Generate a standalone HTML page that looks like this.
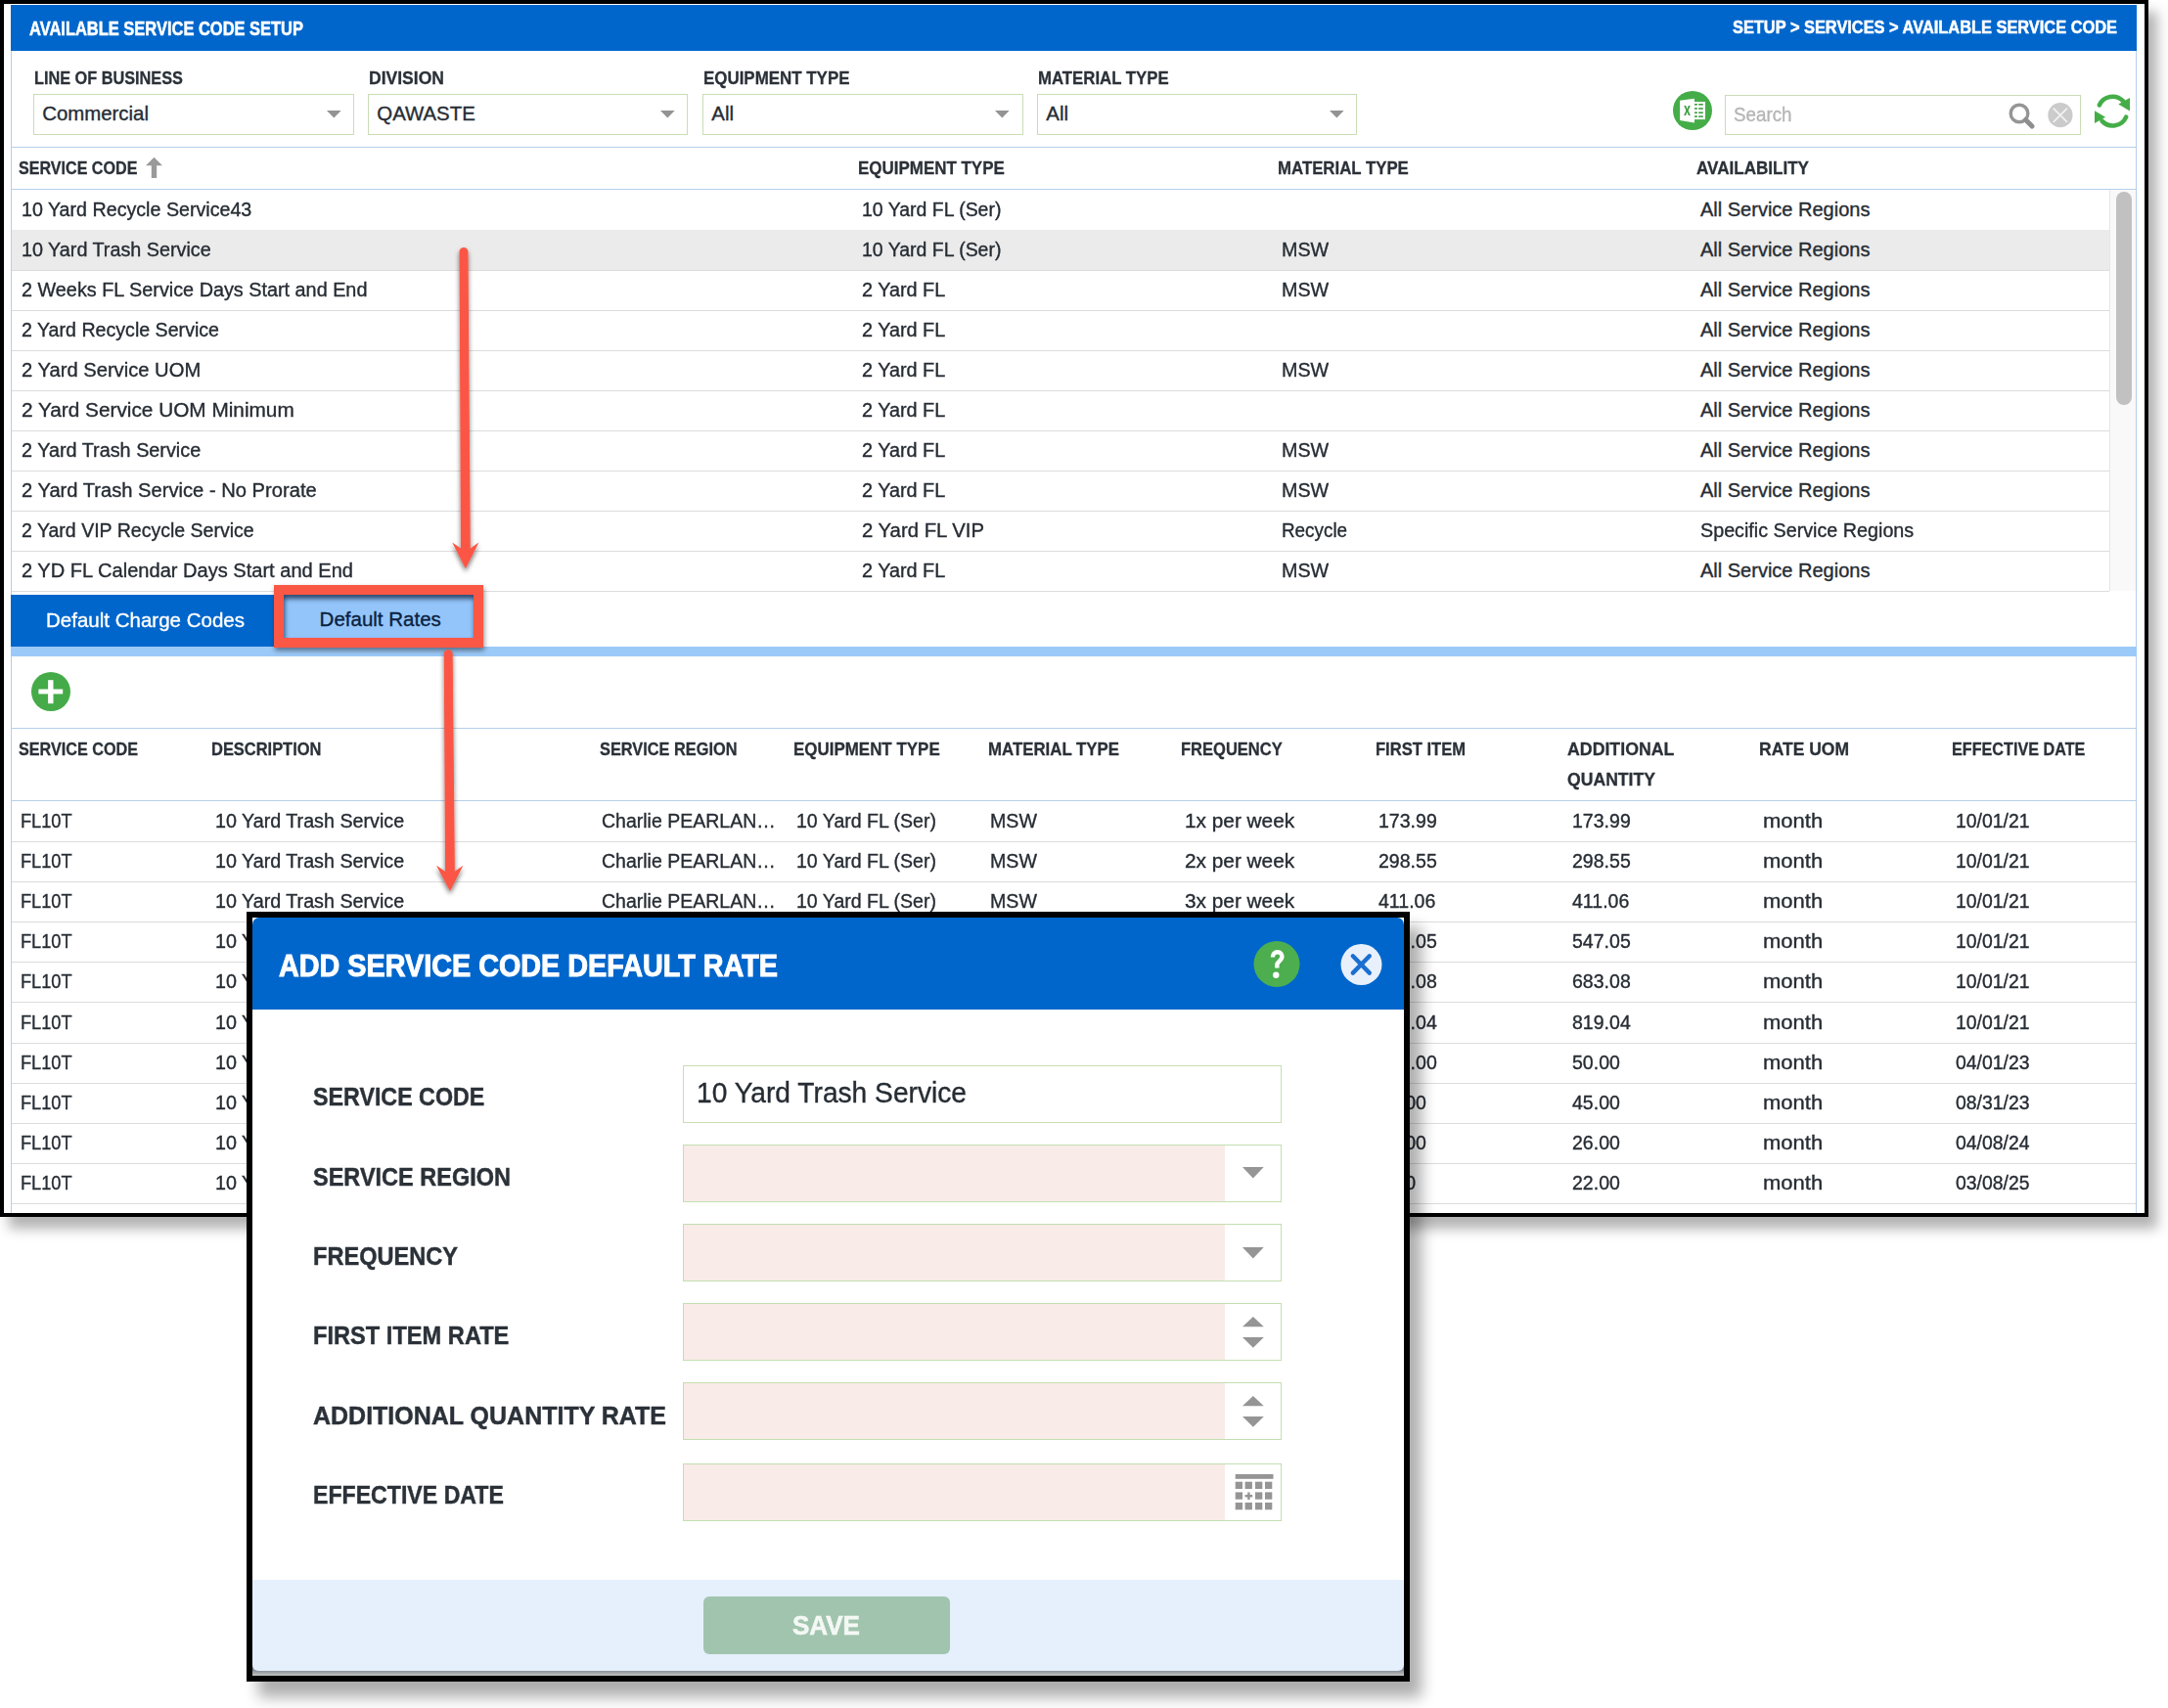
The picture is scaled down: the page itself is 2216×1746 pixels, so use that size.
<!DOCTYPE html>
<html><head><meta charset="utf-8">
<style>
html,body{margin:0;padding:0;}
body{width:2216px;height:1746px;position:relative;overflow:hidden;background:#fff;font-family:"Liberation Sans",sans-serif;}
.a{position:absolute;}
.t{position:absolute;white-space:nowrap;line-height:1;}
</style></head><body>
<div class="a" style="left:0;top:0;width:2196px;height:1244px;box-sizing:border-box;border:4px solid #000;background:#fff;box-shadow:9px 12px 12px rgba(0,0,0,.30);"></div>
<div class="a" style="left:11.0px;top:5.0px;width:2173.0px;height:47.0px;background:#0066cc;"></div>
<div class="t" style="left:30.0px;top:19.8px;font-size:19.3px;font-weight:bold;color:#ffffff;-webkit-text-stroke:0.3px #ffffff;transform:scaleX(0.8541);transform-origin:0 0;-webkit-text-stroke:0.5px #fff;">AVAILABLE SERVICE CODE SETUP</div>
<div class="t" style="left:1771.3px;top:18.7px;font-size:18.6px;font-weight:bold;color:#ffffff;-webkit-text-stroke:0.3px #ffffff;transform:scaleX(0.8811);transform-origin:0 0;-webkit-text-stroke:0.5px #fff;">SETUP &gt; SERVICES &gt; AVAILABLE SERVICE CODE</div>
<div class="a" style="left:11.0px;top:52.0px;width:1.0px;height:1188.0px;background:#b5cfec;"></div>
<div class="a" style="left:2183.0px;top:52.0px;width:1.0px;height:1188.0px;background:#b5cfec;"></div>
<div class="t" style="left:35.0px;top:70.7px;font-size:18.6px;font-weight:bold;color:#2b3138;-webkit-text-stroke:0.3px #2b3138;transform:scaleX(0.8751);transform-origin:0 0;">LINE OF BUSINESS</div>
<div class="a" style="left:34.2px;top:96.3px;width:328.1px;height:41.9px;box-sizing:border-box;border:1px solid #c9ddb6;background:#fff;"></div>
<div class="t" style="left:43.2px;top:105.6px;font-size:20.4px;color:#262c33;-webkit-text-stroke:0.35px #262c33;">Commercial</div>
<svg class="a" style="left:333.6px;top:113px" width="15" height="8" viewBox="0 0 15 8"><path d="M0 0H14.7L7.35 7.5Z" fill="#939393"/></svg>
<div class="t" style="left:377.1px;top:70.7px;font-size:18.6px;font-weight:bold;color:#2b3138;-webkit-text-stroke:0.3px #2b3138;transform:scaleX(0.9433);transform-origin:0 0;">DIVISION</div>
<div class="a" style="left:376.3px;top:96.3px;width:327.1px;height:41.9px;box-sizing:border-box;border:1px solid #c9ddb6;background:#fff;"></div>
<div class="t" style="left:385.3px;top:105.6px;font-size:20.4px;color:#262c33;-webkit-text-stroke:0.35px #262c33;">QAWASTE</div>
<svg class="a" style="left:674.7px;top:113px" width="15" height="8" viewBox="0 0 15 8"><path d="M0 0H14.7L7.35 7.5Z" fill="#939393"/></svg>
<div class="t" style="left:719.1px;top:70.7px;font-size:18.6px;font-weight:bold;color:#2b3138;-webkit-text-stroke:0.3px #2b3138;transform:scaleX(0.9100);transform-origin:0 0;">EQUIPMENT TYPE</div>
<div class="a" style="left:718.3px;top:96.3px;width:327.4px;height:41.9px;box-sizing:border-box;border:1px solid #c9ddb6;background:#fff;"></div>
<div class="t" style="left:727.3px;top:105.6px;font-size:20.4px;color:#262c33;-webkit-text-stroke:0.35px #262c33;">All</div>
<svg class="a" style="left:1017.0px;top:113px" width="15" height="8" viewBox="0 0 15 8"><path d="M0 0H14.7L7.35 7.5Z" fill="#939393"/></svg>
<div class="t" style="left:1061.1px;top:70.7px;font-size:18.6px;font-weight:bold;color:#2b3138;-webkit-text-stroke:0.3px #2b3138;transform:scaleX(0.9022);transform-origin:0 0;">MATERIAL TYPE</div>
<div class="a" style="left:1060.3px;top:96.3px;width:327.2px;height:41.9px;box-sizing:border-box;border:1px solid #c9ddb6;background:#fff;"></div>
<div class="t" style="left:1069.3px;top:105.6px;font-size:20.4px;color:#262c33;-webkit-text-stroke:0.35px #262c33;">All</div>
<svg class="a" style="left:1358.8px;top:113px" width="15" height="8" viewBox="0 0 15 8"><path d="M0 0H14.7L7.35 7.5Z" fill="#939393"/></svg>
<div class="a" style="left:11.0px;top:150.0px;width:2173.0px;height:1.0px;background:#b5cfec;"></div>
<div class="t" style="left:18.7px;top:162.6px;font-size:18.6px;font-weight:bold;color:#2b3138;-webkit-text-stroke:0.3px #2b3138;transform:scaleX(0.8660);transform-origin:0 0;">SERVICE CODE</div>
<div class="t" style="left:876.5px;top:162.6px;font-size:18.6px;font-weight:bold;color:#2b3138;-webkit-text-stroke:0.3px #2b3138;transform:scaleX(0.9119);transform-origin:0 0;">EQUIPMENT TYPE</div>
<div class="t" style="left:1306.0px;top:162.6px;font-size:18.6px;font-weight:bold;color:#2b3138;-webkit-text-stroke:0.3px #2b3138;transform:scaleX(0.9036);transform-origin:0 0;">MATERIAL TYPE</div>
<div class="t" style="left:1734.4px;top:162.6px;font-size:18.6px;font-weight:bold;color:#2b3138;-webkit-text-stroke:0.3px #2b3138;transform:scaleX(0.9176);transform-origin:0 0;">AVAILABILITY</div>
<svg class="a" style="left:149px;top:160px" width="18" height="23" viewBox="0 0 18 23"><path d="M8.5 0.7L17 9.2H11.2V22H5.8V9.2H0Z" fill="#9a9a9a"/></svg>
<div class="a" style="left:11.0px;top:193.0px;width:2173.0px;height:1.0px;background:#b5cfec;"></div>
<div class="a" style="left:12.0px;top:235.0px;width:2144.0px;height:1.0px;background:#dcdcdc;"></div>
<div class="t" style="left:21.5px;top:203.7px;font-size:20px;color:#262c33;-webkit-text-stroke:0.35px #262c33;transform:scaleX(0.9829);transform-origin:0 0;">10 Yard Recycle Service43</div>
<div class="t" style="left:880.5px;top:203.7px;font-size:20px;color:#262c33;-webkit-text-stroke:0.35px #262c33;transform:scaleX(0.9729);transform-origin:0 0;">10 Yard FL (Ser)</div>
<div class="t" style="left:1738.0px;top:203.7px;font-size:20px;color:#262c33;-webkit-text-stroke:0.35px #262c33;">All Service Regions</div>
<div class="a" style="left:12.0px;top:276.0px;width:2144.0px;height:1.0px;background:#dcdcdc;"></div>
<div class="a" style="left:12.0px;top:235.0px;width:2144.0px;height:41.0px;background:#ebebeb;"></div>
<div class="t" style="left:21.5px;top:244.7px;font-size:20px;color:#262c33;-webkit-text-stroke:0.35px #262c33;transform:scaleX(0.9881);transform-origin:0 0;">10 Yard Trash Service</div>
<div class="t" style="left:880.5px;top:244.7px;font-size:20px;color:#262c33;-webkit-text-stroke:0.35px #262c33;transform:scaleX(0.9729);transform-origin:0 0;">10 Yard FL (Ser)</div>
<div class="t" style="left:1309.5px;top:244.7px;font-size:20px;color:#262c33;-webkit-text-stroke:0.35px #262c33;transform:scaleX(0.9859);transform-origin:0 0;">MSW</div>
<div class="t" style="left:1738.0px;top:244.7px;font-size:20px;color:#262c33;-webkit-text-stroke:0.35px #262c33;">All Service Regions</div>
<div class="a" style="left:12.0px;top:317.0px;width:2144.0px;height:1.0px;background:#dcdcdc;"></div>
<div class="t" style="left:21.5px;top:285.7px;font-size:20px;color:#262c33;-webkit-text-stroke:0.35px #262c33;transform:scaleX(0.9904);transform-origin:0 0;">2 Weeks FL Service Days Start and End</div>
<div class="t" style="left:880.5px;top:285.7px;font-size:20px;color:#262c33;-webkit-text-stroke:0.35px #262c33;transform:scaleX(0.9909);transform-origin:0 0;">2 Yard FL</div>
<div class="t" style="left:1309.5px;top:285.7px;font-size:20px;color:#262c33;-webkit-text-stroke:0.35px #262c33;transform:scaleX(0.9859);transform-origin:0 0;">MSW</div>
<div class="t" style="left:1738.0px;top:285.7px;font-size:20px;color:#262c33;-webkit-text-stroke:0.35px #262c33;">All Service Regions</div>
<div class="a" style="left:12.0px;top:358.0px;width:2144.0px;height:1.0px;background:#dcdcdc;"></div>
<div class="t" style="left:21.5px;top:326.7px;font-size:20px;color:#262c33;-webkit-text-stroke:0.35px #262c33;transform:scaleX(0.9805);transform-origin:0 0;">2 Yard Recycle Service</div>
<div class="t" style="left:880.5px;top:326.7px;font-size:20px;color:#262c33;-webkit-text-stroke:0.35px #262c33;transform:scaleX(0.9909);transform-origin:0 0;">2 Yard FL</div>
<div class="t" style="left:1738.0px;top:326.7px;font-size:20px;color:#262c33;-webkit-text-stroke:0.35px #262c33;">All Service Regions</div>
<div class="a" style="left:12.0px;top:399.0px;width:2144.0px;height:1.0px;background:#dcdcdc;"></div>
<div class="t" style="left:21.5px;top:367.7px;font-size:20px;color:#262c33;-webkit-text-stroke:0.35px #262c33;transform:scaleX(1.0091);transform-origin:0 0;">2 Yard Service UOM</div>
<div class="t" style="left:880.5px;top:367.7px;font-size:20px;color:#262c33;-webkit-text-stroke:0.35px #262c33;transform:scaleX(0.9909);transform-origin:0 0;">2 Yard FL</div>
<div class="t" style="left:1309.5px;top:367.7px;font-size:20px;color:#262c33;-webkit-text-stroke:0.35px #262c33;transform:scaleX(0.9859);transform-origin:0 0;">MSW</div>
<div class="t" style="left:1738.0px;top:367.7px;font-size:20px;color:#262c33;-webkit-text-stroke:0.35px #262c33;">All Service Regions</div>
<div class="a" style="left:12.0px;top:440.0px;width:2144.0px;height:1.0px;background:#dcdcdc;"></div>
<div class="t" style="left:21.5px;top:408.7px;font-size:20px;color:#262c33;-webkit-text-stroke:0.35px #262c33;transform:scaleX(1.0391);transform-origin:0 0;">2 Yard Service UOM Minimum</div>
<div class="t" style="left:880.5px;top:408.7px;font-size:20px;color:#262c33;-webkit-text-stroke:0.35px #262c33;transform:scaleX(0.9909);transform-origin:0 0;">2 Yard FL</div>
<div class="t" style="left:1738.0px;top:408.7px;font-size:20px;color:#262c33;-webkit-text-stroke:0.35px #262c33;">All Service Regions</div>
<div class="a" style="left:12.0px;top:481.0px;width:2144.0px;height:1.0px;background:#dcdcdc;"></div>
<div class="t" style="left:21.5px;top:449.7px;font-size:20px;color:#262c33;-webkit-text-stroke:0.35px #262c33;transform:scaleX(0.9908);transform-origin:0 0;">2 Yard Trash Service</div>
<div class="t" style="left:880.5px;top:449.7px;font-size:20px;color:#262c33;-webkit-text-stroke:0.35px #262c33;transform:scaleX(0.9909);transform-origin:0 0;">2 Yard FL</div>
<div class="t" style="left:1309.5px;top:449.7px;font-size:20px;color:#262c33;-webkit-text-stroke:0.35px #262c33;transform:scaleX(0.9859);transform-origin:0 0;">MSW</div>
<div class="t" style="left:1738.0px;top:449.7px;font-size:20px;color:#262c33;-webkit-text-stroke:0.35px #262c33;">All Service Regions</div>
<div class="a" style="left:12.0px;top:522.0px;width:2144.0px;height:1.0px;background:#dcdcdc;"></div>
<div class="t" style="left:21.5px;top:490.7px;font-size:20px;color:#262c33;-webkit-text-stroke:0.35px #262c33;transform:scaleX(1.0077);transform-origin:0 0;">2 Yard Trash Service - No Prorate</div>
<div class="t" style="left:880.5px;top:490.7px;font-size:20px;color:#262c33;-webkit-text-stroke:0.35px #262c33;transform:scaleX(0.9909);transform-origin:0 0;">2 Yard FL</div>
<div class="t" style="left:1309.5px;top:490.7px;font-size:20px;color:#262c33;-webkit-text-stroke:0.35px #262c33;transform:scaleX(0.9859);transform-origin:0 0;">MSW</div>
<div class="t" style="left:1738.0px;top:490.7px;font-size:20px;color:#262c33;-webkit-text-stroke:0.35px #262c33;">All Service Regions</div>
<div class="a" style="left:12.0px;top:563.0px;width:2144.0px;height:1.0px;background:#dcdcdc;"></div>
<div class="t" style="left:21.5px;top:531.7px;font-size:20px;color:#262c33;-webkit-text-stroke:0.35px #262c33;transform:scaleX(0.9764);transform-origin:0 0;">2 Yard VIP Recycle Service</div>
<div class="t" style="left:880.5px;top:531.7px;font-size:20px;color:#262c33;-webkit-text-stroke:0.35px #262c33;transform:scaleX(1.0160);transform-origin:0 0;">2 Yard FL VIP</div>
<div class="t" style="left:1309.5px;top:531.7px;font-size:20px;color:#262c33;-webkit-text-stroke:0.35px #262c33;transform:scaleX(0.9432);transform-origin:0 0;">Recycle</div>
<div class="t" style="left:1738.0px;top:531.7px;font-size:20px;color:#262c33;-webkit-text-stroke:0.35px #262c33;transform:scaleX(0.9864);transform-origin:0 0;">Specific Service Regions</div>
<div class="a" style="left:12.0px;top:604.0px;width:2144.0px;height:1.0px;background:#dcdcdc;"></div>
<div class="t" style="left:21.5px;top:572.7px;font-size:20px;color:#262c33;-webkit-text-stroke:0.35px #262c33;transform:scaleX(1.0031);transform-origin:0 0;">2 YD FL Calendar Days Start and End</div>
<div class="t" style="left:880.5px;top:572.7px;font-size:20px;color:#262c33;-webkit-text-stroke:0.35px #262c33;transform:scaleX(0.9909);transform-origin:0 0;">2 Yard FL</div>
<div class="t" style="left:1309.5px;top:572.7px;font-size:20px;color:#262c33;-webkit-text-stroke:0.35px #262c33;transform:scaleX(0.9859);transform-origin:0 0;">MSW</div>
<div class="t" style="left:1738.0px;top:572.7px;font-size:20px;color:#262c33;-webkit-text-stroke:0.35px #262c33;">All Service Regions</div>
<div class="a" style="left:2156.0px;top:194.0px;width:27.0px;height:410.0px;background:#f9f9f9;border-left:1px solid #e6e6e6;box-sizing:border-box;"></div>
<div class="a" style="left:2163.0px;top:196.0px;width:16.0px;height:218.0px;background:#c1c1c1;border-radius:8px;"></div>
<div class="a" style="left:11.0px;top:608.0px;width:279.0px;height:53.0px;background:#0066cc;"></div>
<div class="t" style="left:47.0px;top:623.6px;font-size:20.8px;color:#ffffff;-webkit-text-stroke:0.35px #ffffff;transform:scaleX(0.9865);transform-origin:0 0;">Default Charge Codes</div>
<div class="a" style="left:290.0px;top:608.0px;width:194.0px;height:53.0px;background:#94c5fa;"></div>
<div class="a" style="left:11.0px;top:661.0px;width:2173.0px;height:10.0px;background:#9ccaf8;"></div>
<div class="t" style="left:326.6px;top:623.2px;font-size:20.5px;color:#0b1f3f;-webkit-text-stroke:0.35px #0b1f3f;">Default Rates</div>
<div class="a" style="left:280px;top:598px;width:214px;height:64px;box-sizing:border-box;border:10px solid #fb5745;box-shadow:1px 3px 5px rgba(0,0,0,.45), inset 1px 4px 5px rgba(10,30,60,.75);"></div>
<svg class="a" style="left:32px;top:687px" width="40" height="40" viewBox="0 0 40 40"><circle cx="20" cy="20" r="20" fill="#45ab48"/><rect x="7.4" y="17.5" width="24.8" height="4.9" fill="#fff"/><rect x="17.1" y="8.2" width="5.4" height="24" fill="#fff"/></svg>
<div class="a" style="left:11.0px;top:744.0px;width:2173.0px;height:1.0px;background:#b5cfec;"></div>
<div class="t" style="left:19.0px;top:757.2px;font-size:18.6px;font-weight:bold;color:#2b3138;-webkit-text-stroke:0.3px #2b3138;transform:scaleX(0.8703);transform-origin:0 0;">SERVICE CODE</div>
<div class="t" style="left:216.4px;top:757.2px;font-size:18.6px;font-weight:bold;color:#2b3138;-webkit-text-stroke:0.3px #2b3138;transform:scaleX(0.8845);transform-origin:0 0;">DESCRIPTION</div>
<div class="t" style="left:613.3px;top:757.2px;font-size:18.6px;font-weight:bold;color:#2b3138;-webkit-text-stroke:0.3px #2b3138;transform:scaleX(0.8792);transform-origin:0 0;">SERVICE REGION</div>
<div class="t" style="left:811.2px;top:757.2px;font-size:18.6px;font-weight:bold;color:#2b3138;-webkit-text-stroke:0.3px #2b3138;transform:scaleX(0.9112);transform-origin:0 0;">EQUIPMENT TYPE</div>
<div class="t" style="left:1009.5px;top:757.2px;font-size:18.6px;font-weight:bold;color:#2b3138;-webkit-text-stroke:0.3px #2b3138;transform:scaleX(0.9049);transform-origin:0 0;">MATERIAL TYPE</div>
<div class="t" style="left:1207.4px;top:757.2px;font-size:18.6px;font-weight:bold;color:#2b3138;-webkit-text-stroke:0.3px #2b3138;transform:scaleX(0.8882);transform-origin:0 0;">FREQUENCY</div>
<div class="t" style="left:1405.6px;top:757.2px;font-size:18.6px;font-weight:bold;color:#2b3138;-webkit-text-stroke:0.3px #2b3138;transform:scaleX(0.8906);transform-origin:0 0;">FIRST ITEM</div>
<div class="t" style="left:1602.0px;top:757.2px;font-size:18.6px;font-weight:bold;color:#2b3138;-webkit-text-stroke:0.3px #2b3138;transform:scaleX(0.9542);transform-origin:0 0;">ADDITIONAL</div>
<div class="t" style="left:1798.2px;top:757.2px;font-size:18.6px;font-weight:bold;color:#2b3138;-webkit-text-stroke:0.3px #2b3138;transform:scaleX(0.9409);transform-origin:0 0;">RATE UOM</div>
<div class="t" style="left:1994.7px;top:757.2px;font-size:18.6px;font-weight:bold;color:#2b3138;-webkit-text-stroke:0.3px #2b3138;transform:scaleX(0.8705);transform-origin:0 0;">EFFECTIVE DATE</div>
<div class="t" style="left:1602.0px;top:787.6px;font-size:18.6px;font-weight:bold;color:#2b3138;-webkit-text-stroke:0.3px #2b3138;transform:scaleX(0.9471);transform-origin:0 0;">QUANTITY</div>
<div class="a" style="left:11.0px;top:818.0px;width:2173.0px;height:1.0px;background:#b5cfec;"></div>
<div class="a" style="left:12.0px;top:860.0px;width:2171.0px;height:1.0px;background:#dcdcdc;"></div>
<div class="t" style="left:20.5px;top:828.6px;font-size:20px;color:#262c33;-webkit-text-stroke:0.35px #262c33;transform:scaleX(0.9100);transform-origin:0 0;">FL10T</div>
<div class="t" style="left:219.7px;top:828.6px;font-size:20px;color:#262c33;-webkit-text-stroke:0.35px #262c33;transform:scaleX(0.9850);transform-origin:0 0;">10 Yard Trash Service</div>
<div class="t" style="left:615.3px;top:828.6px;font-size:20px;color:#262c33;-webkit-text-stroke:0.35px #262c33;transform:scaleX(0.9750);transform-origin:0 0;">Charlie PEARLAN…</div>
<div class="t" style="left:814.0px;top:828.6px;font-size:20px;color:#262c33;-webkit-text-stroke:0.35px #262c33;transform:scaleX(0.9770);transform-origin:0 0;">10 Yard FL (Ser)</div>
<div class="t" style="left:1012.0px;top:828.6px;font-size:20px;color:#262c33;-webkit-text-stroke:0.35px #262c33;transform:scaleX(0.9800);transform-origin:0 0;">MSW</div>
<div class="t" style="left:1211.2px;top:828.6px;font-size:20px;color:#262c33;-webkit-text-stroke:0.35px #262c33;transform:scaleX(1.0400);transform-origin:0 0;">1x per week</div>
<div class="t" style="left:1409.4px;top:828.6px;font-size:20px;color:#262c33;-webkit-text-stroke:0.35px #262c33;transform:scaleX(0.9770);transform-origin:0 0;">173.99</div>
<div class="t" style="left:1606.8px;top:828.6px;font-size:20px;color:#262c33;-webkit-text-stroke:0.35px #262c33;transform:scaleX(0.9770);transform-origin:0 0;">173.99</div>
<div class="t" style="left:1801.7px;top:828.6px;font-size:20px;color:#262c33;-webkit-text-stroke:0.35px #262c33;transform:scaleX(1.1000);transform-origin:0 0;">month</div>
<div class="t" style="left:1999.0px;top:828.6px;font-size:20px;color:#262c33;-webkit-text-stroke:0.35px #262c33;transform:scaleX(0.9700);transform-origin:0 0;">10/01/21</div>
<div class="a" style="left:12.0px;top:901.0px;width:2171.0px;height:1.0px;background:#dcdcdc;"></div>
<div class="t" style="left:20.5px;top:869.6px;font-size:20px;color:#262c33;-webkit-text-stroke:0.35px #262c33;transform:scaleX(0.9100);transform-origin:0 0;">FL10T</div>
<div class="t" style="left:219.7px;top:869.6px;font-size:20px;color:#262c33;-webkit-text-stroke:0.35px #262c33;transform:scaleX(0.9850);transform-origin:0 0;">10 Yard Trash Service</div>
<div class="t" style="left:615.3px;top:869.6px;font-size:20px;color:#262c33;-webkit-text-stroke:0.35px #262c33;transform:scaleX(0.9750);transform-origin:0 0;">Charlie PEARLAN…</div>
<div class="t" style="left:814.0px;top:869.6px;font-size:20px;color:#262c33;-webkit-text-stroke:0.35px #262c33;transform:scaleX(0.9770);transform-origin:0 0;">10 Yard FL (Ser)</div>
<div class="t" style="left:1012.0px;top:869.6px;font-size:20px;color:#262c33;-webkit-text-stroke:0.35px #262c33;transform:scaleX(0.9800);transform-origin:0 0;">MSW</div>
<div class="t" style="left:1211.2px;top:869.6px;font-size:20px;color:#262c33;-webkit-text-stroke:0.35px #262c33;transform:scaleX(1.0400);transform-origin:0 0;">2x per week</div>
<div class="t" style="left:1409.4px;top:869.6px;font-size:20px;color:#262c33;-webkit-text-stroke:0.35px #262c33;transform:scaleX(0.9770);transform-origin:0 0;">298.55</div>
<div class="t" style="left:1606.8px;top:869.6px;font-size:20px;color:#262c33;-webkit-text-stroke:0.35px #262c33;transform:scaleX(0.9770);transform-origin:0 0;">298.55</div>
<div class="t" style="left:1801.7px;top:869.6px;font-size:20px;color:#262c33;-webkit-text-stroke:0.35px #262c33;transform:scaleX(1.1000);transform-origin:0 0;">month</div>
<div class="t" style="left:1999.0px;top:869.6px;font-size:20px;color:#262c33;-webkit-text-stroke:0.35px #262c33;transform:scaleX(0.9700);transform-origin:0 0;">10/01/21</div>
<div class="a" style="left:12.0px;top:942.0px;width:2171.0px;height:1.0px;background:#dcdcdc;"></div>
<div class="t" style="left:20.5px;top:910.6px;font-size:20px;color:#262c33;-webkit-text-stroke:0.35px #262c33;transform:scaleX(0.9100);transform-origin:0 0;">FL10T</div>
<div class="t" style="left:219.7px;top:910.6px;font-size:20px;color:#262c33;-webkit-text-stroke:0.35px #262c33;transform:scaleX(0.9850);transform-origin:0 0;">10 Yard Trash Service</div>
<div class="t" style="left:615.3px;top:910.6px;font-size:20px;color:#262c33;-webkit-text-stroke:0.35px #262c33;transform:scaleX(0.9750);transform-origin:0 0;">Charlie PEARLAN…</div>
<div class="t" style="left:814.0px;top:910.6px;font-size:20px;color:#262c33;-webkit-text-stroke:0.35px #262c33;transform:scaleX(0.9770);transform-origin:0 0;">10 Yard FL (Ser)</div>
<div class="t" style="left:1012.0px;top:910.6px;font-size:20px;color:#262c33;-webkit-text-stroke:0.35px #262c33;transform:scaleX(0.9800);transform-origin:0 0;">MSW</div>
<div class="t" style="left:1211.2px;top:910.6px;font-size:20px;color:#262c33;-webkit-text-stroke:0.35px #262c33;transform:scaleX(1.0400);transform-origin:0 0;">3x per week</div>
<div class="t" style="left:1409.4px;top:910.6px;font-size:20px;color:#262c33;-webkit-text-stroke:0.35px #262c33;transform:scaleX(0.9770);transform-origin:0 0;">411.06</div>
<div class="t" style="left:1606.8px;top:910.6px;font-size:20px;color:#262c33;-webkit-text-stroke:0.35px #262c33;transform:scaleX(0.9770);transform-origin:0 0;">411.06</div>
<div class="t" style="left:1801.7px;top:910.6px;font-size:20px;color:#262c33;-webkit-text-stroke:0.35px #262c33;transform:scaleX(1.1000);transform-origin:0 0;">month</div>
<div class="t" style="left:1999.0px;top:910.6px;font-size:20px;color:#262c33;-webkit-text-stroke:0.35px #262c33;transform:scaleX(0.9700);transform-origin:0 0;">10/01/21</div>
<div class="a" style="left:12.0px;top:983.0px;width:2171.0px;height:1.0px;background:#dcdcdc;"></div>
<div class="t" style="left:20.5px;top:951.6px;font-size:20px;color:#262c33;-webkit-text-stroke:0.35px #262c33;transform:scaleX(0.9100);transform-origin:0 0;">FL10T</div>
<div class="t" style="left:219.7px;top:951.6px;font-size:20px;color:#262c33;-webkit-text-stroke:0.35px #262c33;transform:scaleX(0.9850);transform-origin:0 0;">10 Yard Trash Service</div>
<div class="t" style="left:615.3px;top:951.6px;font-size:20px;color:#262c33;-webkit-text-stroke:0.35px #262c33;transform:scaleX(0.9750);transform-origin:0 0;">Charlie PEARLAN…</div>
<div class="t" style="left:814.0px;top:951.6px;font-size:20px;color:#262c33;-webkit-text-stroke:0.35px #262c33;transform:scaleX(0.9770);transform-origin:0 0;">10 Yard FL (Ser)</div>
<div class="t" style="left:1012.0px;top:951.6px;font-size:20px;color:#262c33;-webkit-text-stroke:0.35px #262c33;transform:scaleX(0.9800);transform-origin:0 0;">MSW</div>
<div class="t" style="left:1211.2px;top:951.6px;font-size:20px;color:#262c33;-webkit-text-stroke:0.35px #262c33;transform:scaleX(1.0400);transform-origin:0 0;">4x per week</div>
<div class="t" style="left:1409.4px;top:951.6px;font-size:20px;color:#262c33;-webkit-text-stroke:0.35px #262c33;transform:scaleX(0.9770);transform-origin:0 0;">547.05</div>
<div class="t" style="left:1606.8px;top:951.6px;font-size:20px;color:#262c33;-webkit-text-stroke:0.35px #262c33;transform:scaleX(0.9770);transform-origin:0 0;">547.05</div>
<div class="t" style="left:1801.7px;top:951.6px;font-size:20px;color:#262c33;-webkit-text-stroke:0.35px #262c33;transform:scaleX(1.1000);transform-origin:0 0;">month</div>
<div class="t" style="left:1999.0px;top:951.6px;font-size:20px;color:#262c33;-webkit-text-stroke:0.35px #262c33;transform:scaleX(0.9700);transform-origin:0 0;">10/01/21</div>
<div class="a" style="left:12.0px;top:1024.0px;width:2171.0px;height:1.0px;background:#dcdcdc;"></div>
<div class="t" style="left:20.5px;top:992.6px;font-size:20px;color:#262c33;-webkit-text-stroke:0.35px #262c33;transform:scaleX(0.9100);transform-origin:0 0;">FL10T</div>
<div class="t" style="left:219.7px;top:992.6px;font-size:20px;color:#262c33;-webkit-text-stroke:0.35px #262c33;transform:scaleX(0.9850);transform-origin:0 0;">10 Yard Trash Service</div>
<div class="t" style="left:615.3px;top:992.6px;font-size:20px;color:#262c33;-webkit-text-stroke:0.35px #262c33;transform:scaleX(0.9750);transform-origin:0 0;">Charlie PEARLAN…</div>
<div class="t" style="left:814.0px;top:992.6px;font-size:20px;color:#262c33;-webkit-text-stroke:0.35px #262c33;transform:scaleX(0.9770);transform-origin:0 0;">10 Yard FL (Ser)</div>
<div class="t" style="left:1012.0px;top:992.6px;font-size:20px;color:#262c33;-webkit-text-stroke:0.35px #262c33;transform:scaleX(0.9800);transform-origin:0 0;">MSW</div>
<div class="t" style="left:1211.2px;top:992.6px;font-size:20px;color:#262c33;-webkit-text-stroke:0.35px #262c33;transform:scaleX(1.0400);transform-origin:0 0;">5x per week</div>
<div class="t" style="left:1409.4px;top:992.6px;font-size:20px;color:#262c33;-webkit-text-stroke:0.35px #262c33;transform:scaleX(0.9770);transform-origin:0 0;">683.08</div>
<div class="t" style="left:1606.8px;top:992.6px;font-size:20px;color:#262c33;-webkit-text-stroke:0.35px #262c33;transform:scaleX(0.9770);transform-origin:0 0;">683.08</div>
<div class="t" style="left:1801.7px;top:992.6px;font-size:20px;color:#262c33;-webkit-text-stroke:0.35px #262c33;transform:scaleX(1.1000);transform-origin:0 0;">month</div>
<div class="t" style="left:1999.0px;top:992.6px;font-size:20px;color:#262c33;-webkit-text-stroke:0.35px #262c33;transform:scaleX(0.9700);transform-origin:0 0;">10/01/21</div>
<div class="a" style="left:12.0px;top:1066.0px;width:2171.0px;height:1.0px;background:#dcdcdc;"></div>
<div class="t" style="left:20.5px;top:1034.6px;font-size:20px;color:#262c33;-webkit-text-stroke:0.35px #262c33;transform:scaleX(0.9100);transform-origin:0 0;">FL10T</div>
<div class="t" style="left:219.7px;top:1034.6px;font-size:20px;color:#262c33;-webkit-text-stroke:0.35px #262c33;transform:scaleX(0.9850);transform-origin:0 0;">10 Yard Trash Service</div>
<div class="t" style="left:615.3px;top:1034.6px;font-size:20px;color:#262c33;-webkit-text-stroke:0.35px #262c33;transform:scaleX(0.9750);transform-origin:0 0;">Charlie PEARLAN…</div>
<div class="t" style="left:814.0px;top:1034.6px;font-size:20px;color:#262c33;-webkit-text-stroke:0.35px #262c33;transform:scaleX(0.9770);transform-origin:0 0;">10 Yard FL (Ser)</div>
<div class="t" style="left:1012.0px;top:1034.6px;font-size:20px;color:#262c33;-webkit-text-stroke:0.35px #262c33;transform:scaleX(0.9800);transform-origin:0 0;">MSW</div>
<div class="t" style="left:1211.2px;top:1034.6px;font-size:20px;color:#262c33;-webkit-text-stroke:0.35px #262c33;transform:scaleX(1.0400);transform-origin:0 0;">6x per week</div>
<div class="t" style="left:1409.4px;top:1034.6px;font-size:20px;color:#262c33;-webkit-text-stroke:0.35px #262c33;transform:scaleX(0.9770);transform-origin:0 0;">819.04</div>
<div class="t" style="left:1606.8px;top:1034.6px;font-size:20px;color:#262c33;-webkit-text-stroke:0.35px #262c33;transform:scaleX(0.9770);transform-origin:0 0;">819.04</div>
<div class="t" style="left:1801.7px;top:1034.6px;font-size:20px;color:#262c33;-webkit-text-stroke:0.35px #262c33;transform:scaleX(1.1000);transform-origin:0 0;">month</div>
<div class="t" style="left:1999.0px;top:1034.6px;font-size:20px;color:#262c33;-webkit-text-stroke:0.35px #262c33;transform:scaleX(0.9700);transform-origin:0 0;">10/01/21</div>
<div class="a" style="left:12.0px;top:1107.0px;width:2171.0px;height:1.0px;background:#dcdcdc;"></div>
<div class="t" style="left:20.5px;top:1075.6px;font-size:20px;color:#262c33;-webkit-text-stroke:0.35px #262c33;transform:scaleX(0.9100);transform-origin:0 0;">FL10T</div>
<div class="t" style="left:219.7px;top:1075.6px;font-size:20px;color:#262c33;-webkit-text-stroke:0.35px #262c33;transform:scaleX(0.9850);transform-origin:0 0;">10 Yard Trash Service</div>
<div class="t" style="left:615.3px;top:1075.6px;font-size:20px;color:#262c33;-webkit-text-stroke:0.35px #262c33;transform:scaleX(0.9750);transform-origin:0 0;">Charlie PEARLAN…</div>
<div class="t" style="left:814.0px;top:1075.6px;font-size:20px;color:#262c33;-webkit-text-stroke:0.35px #262c33;transform:scaleX(0.9770);transform-origin:0 0;">10 Yard FL (Ser)</div>
<div class="t" style="left:1012.0px;top:1075.6px;font-size:20px;color:#262c33;-webkit-text-stroke:0.35px #262c33;transform:scaleX(0.9800);transform-origin:0 0;">MSW</div>
<div class="t" style="left:1211.2px;top:1075.6px;font-size:20px;color:#262c33;-webkit-text-stroke:0.35px #262c33;transform:scaleX(1.0400);transform-origin:0 0;">1x per week</div>
<div class="t" style="left:1409.4px;top:1075.6px;font-size:20px;color:#262c33;-webkit-text-stroke:0.35px #262c33;transform:scaleX(0.9770);transform-origin:0 0;">150.00</div>
<div class="t" style="left:1606.8px;top:1075.6px;font-size:20px;color:#262c33;-webkit-text-stroke:0.35px #262c33;transform:scaleX(0.9770);transform-origin:0 0;">50.00</div>
<div class="t" style="left:1801.7px;top:1075.6px;font-size:20px;color:#262c33;-webkit-text-stroke:0.35px #262c33;transform:scaleX(1.1000);transform-origin:0 0;">month</div>
<div class="t" style="left:1999.0px;top:1075.6px;font-size:20px;color:#262c33;-webkit-text-stroke:0.35px #262c33;transform:scaleX(0.9700);transform-origin:0 0;">04/01/23</div>
<div class="a" style="left:12.0px;top:1148.0px;width:2171.0px;height:1.0px;background:#dcdcdc;"></div>
<div class="t" style="left:20.5px;top:1116.6px;font-size:20px;color:#262c33;-webkit-text-stroke:0.35px #262c33;transform:scaleX(0.9100);transform-origin:0 0;">FL10T</div>
<div class="t" style="left:219.7px;top:1116.6px;font-size:20px;color:#262c33;-webkit-text-stroke:0.35px #262c33;transform:scaleX(0.9850);transform-origin:0 0;">10 Yard Trash Service</div>
<div class="t" style="left:615.3px;top:1116.6px;font-size:20px;color:#262c33;-webkit-text-stroke:0.35px #262c33;transform:scaleX(0.9750);transform-origin:0 0;">Charlie PEARLAN…</div>
<div class="t" style="left:814.0px;top:1116.6px;font-size:20px;color:#262c33;-webkit-text-stroke:0.35px #262c33;transform:scaleX(0.9770);transform-origin:0 0;">10 Yard FL (Ser)</div>
<div class="t" style="left:1012.0px;top:1116.6px;font-size:20px;color:#262c33;-webkit-text-stroke:0.35px #262c33;transform:scaleX(0.9800);transform-origin:0 0;">MSW</div>
<div class="t" style="left:1211.2px;top:1116.6px;font-size:20px;color:#262c33;-webkit-text-stroke:0.35px #262c33;transform:scaleX(1.0400);transform-origin:0 0;">1x per week</div>
<div class="t" style="left:1409.4px;top:1116.6px;font-size:20px;color:#262c33;-webkit-text-stroke:0.35px #262c33;transform:scaleX(0.9770);transform-origin:0 0;">45.00</div>
<div class="t" style="left:1606.8px;top:1116.6px;font-size:20px;color:#262c33;-webkit-text-stroke:0.35px #262c33;transform:scaleX(0.9770);transform-origin:0 0;">45.00</div>
<div class="t" style="left:1801.7px;top:1116.6px;font-size:20px;color:#262c33;-webkit-text-stroke:0.35px #262c33;transform:scaleX(1.1000);transform-origin:0 0;">month</div>
<div class="t" style="left:1999.0px;top:1116.6px;font-size:20px;color:#262c33;-webkit-text-stroke:0.35px #262c33;transform:scaleX(0.9700);transform-origin:0 0;">08/31/23</div>
<div class="a" style="left:12.0px;top:1189.0px;width:2171.0px;height:1.0px;background:#dcdcdc;"></div>
<div class="t" style="left:20.5px;top:1157.6px;font-size:20px;color:#262c33;-webkit-text-stroke:0.35px #262c33;transform:scaleX(0.9100);transform-origin:0 0;">FL10T</div>
<div class="t" style="left:219.7px;top:1157.6px;font-size:20px;color:#262c33;-webkit-text-stroke:0.35px #262c33;transform:scaleX(0.9850);transform-origin:0 0;">10 Yard Trash Service</div>
<div class="t" style="left:615.3px;top:1157.6px;font-size:20px;color:#262c33;-webkit-text-stroke:0.35px #262c33;transform:scaleX(0.9750);transform-origin:0 0;">Charlie PEARLAN…</div>
<div class="t" style="left:814.0px;top:1157.6px;font-size:20px;color:#262c33;-webkit-text-stroke:0.35px #262c33;transform:scaleX(0.9770);transform-origin:0 0;">10 Yard FL (Ser)</div>
<div class="t" style="left:1012.0px;top:1157.6px;font-size:20px;color:#262c33;-webkit-text-stroke:0.35px #262c33;transform:scaleX(0.9800);transform-origin:0 0;">MSW</div>
<div class="t" style="left:1211.2px;top:1157.6px;font-size:20px;color:#262c33;-webkit-text-stroke:0.35px #262c33;transform:scaleX(1.0400);transform-origin:0 0;">1x per week</div>
<div class="t" style="left:1409.4px;top:1157.6px;font-size:20px;color:#262c33;-webkit-text-stroke:0.35px #262c33;transform:scaleX(0.9770);transform-origin:0 0;">26.00</div>
<div class="t" style="left:1606.8px;top:1157.6px;font-size:20px;color:#262c33;-webkit-text-stroke:0.35px #262c33;transform:scaleX(0.9770);transform-origin:0 0;">26.00</div>
<div class="t" style="left:1801.7px;top:1157.6px;font-size:20px;color:#262c33;-webkit-text-stroke:0.35px #262c33;transform:scaleX(1.1000);transform-origin:0 0;">month</div>
<div class="t" style="left:1999.0px;top:1157.6px;font-size:20px;color:#262c33;-webkit-text-stroke:0.35px #262c33;transform:scaleX(0.9700);transform-origin:0 0;">04/08/24</div>
<div class="a" style="left:12.0px;top:1230.0px;width:2171.0px;height:1.0px;background:#dcdcdc;"></div>
<div class="t" style="left:20.5px;top:1198.6px;font-size:20px;color:#262c33;-webkit-text-stroke:0.35px #262c33;transform:scaleX(0.9100);transform-origin:0 0;">FL10T</div>
<div class="t" style="left:219.7px;top:1198.6px;font-size:20px;color:#262c33;-webkit-text-stroke:0.35px #262c33;transform:scaleX(0.9850);transform-origin:0 0;">10 Yard Trash Service</div>
<div class="t" style="left:615.3px;top:1198.6px;font-size:20px;color:#262c33;-webkit-text-stroke:0.35px #262c33;transform:scaleX(0.9750);transform-origin:0 0;">Charlie PEARLAN…</div>
<div class="t" style="left:814.0px;top:1198.6px;font-size:20px;color:#262c33;-webkit-text-stroke:0.35px #262c33;transform:scaleX(0.9770);transform-origin:0 0;">10 Yard FL (Ser)</div>
<div class="t" style="left:1012.0px;top:1198.6px;font-size:20px;color:#262c33;-webkit-text-stroke:0.35px #262c33;transform:scaleX(0.9800);transform-origin:0 0;">MSW</div>
<div class="t" style="left:1211.2px;top:1198.6px;font-size:20px;color:#262c33;-webkit-text-stroke:0.35px #262c33;transform:scaleX(1.0400);transform-origin:0 0;">1x per week</div>
<div class="t" style="left:1409.4px;top:1198.6px;font-size:20px;color:#262c33;-webkit-text-stroke:0.35px #262c33;transform:scaleX(0.9770);transform-origin:0 0;">9.00</div>
<div class="t" style="left:1606.8px;top:1198.6px;font-size:20px;color:#262c33;-webkit-text-stroke:0.35px #262c33;transform:scaleX(0.9770);transform-origin:0 0;">22.00</div>
<div class="t" style="left:1801.7px;top:1198.6px;font-size:20px;color:#262c33;-webkit-text-stroke:0.35px #262c33;transform:scaleX(1.1000);transform-origin:0 0;">month</div>
<div class="t" style="left:1999.0px;top:1198.6px;font-size:20px;color:#262c33;-webkit-text-stroke:0.35px #262c33;transform:scaleX(0.9700);transform-origin:0 0;">03/08/25</div>
<svg class="a" style="left:0;top:0;overflow:visible" width="2216" height="1746"><defs><filter id="ds" x="-50%" y="-20%" width="200%" height="140%"><feGaussianBlur in="SourceAlpha" stdDeviation="2.5"/><feOffset dx="0" dy="3"/><feComponentTransfer><feFuncA type="linear" slope="0.55"/></feComponentTransfer><feMerge><feMergeNode/><feMergeNode in="SourceGraphic"/></feMerge></filter></defs><g filter="url(#ds)" fill="#fb5745"><path d="M469.5 257.5 A4.5 4.5 0 0 1 478.5 257.5 L480.8 560.5 L489.4 554.5 L475.9 581.2 L462.2 554.5 L471.0 560.5 Z"/><path d="M453.7 668.5 A4.5 4.5 0 0 1 462.7 668.5 L464.9 890.7 L473.4 884.7 L460.0 911.0 L446.0 884.7 L455.1 890.7 Z"/></g></svg>
<div class="a" style="left:252px;top:932px;width:1189px;height:787px;box-sizing:border-box;border:6px solid #000;background:#fff;box-shadow:12px 16px 14px rgba(0,0,0,.32);"></div>
<div class="a" style="left:258.0px;top:938.0px;width:1177.0px;height:94.0px;background:#0066cc;border-radius:7px 7px 0 0;"></div>
<div class="t" style="left:284.6px;top:972.1px;font-size:31.9px;font-weight:bold;color:#ffffff;-webkit-text-stroke:0.3px #ffffff;transform:scaleX(0.9023);transform-origin:0 0;-webkit-text-stroke:1.0px #fff;">ADD SERVICE CODE DEFAULT RATE</div>
<svg class="a" style="left:1281px;top:962px" width="48" height="48" viewBox="0 0 48 48"><circle cx="24" cy="23.5" r="23.5" fill="#4cae4f"/></svg>
<svg class="a" style="left:0;top:0" width="2216" height="1746"><path d="M1300.9 978.6C1300.9 975 1303.1 973.3 1305.7 973.3C1308.7 973.3 1310.5 975.4 1310.5 978.1C1310.5 981.6 1305.3 982.9 1305.3 986.2V989.6" fill="none" stroke="#fff" stroke-width="4.4"/><circle cx="1304.3" cy="996.8" r="3.2" fill="#fff"/></svg>
<svg class="a" style="left:1370px;top:965px" width="43" height="43" viewBox="0 0 43 43"><circle cx="21.5" cy="21" r="21" fill="#e8f0fb"/><path d="M12.8 12.3L29.8 29.6M29.8 12.3L12.8 29.6" stroke="#1b6fd0" stroke-width="4.4" stroke-linecap="round"/></svg>
<div class="t" style="left:320.0px;top:1108.1px;font-size:26.4px;font-weight:bold;color:#2b3138;-webkit-text-stroke:0.3px #2b3138;transform:scaleX(0.8810);transform-origin:0 0;-webkit-text-stroke:0.45px #2b3138;">SERVICE CODE</div>
<div class="a" style="left:697.5px;top:1089.3px;width:612.5px;height:59.0px;box-sizing:border-box;border:1px solid #c9ddb6;background:#fff;"></div>
<div class="t" style="left:712.0px;top:1102.0px;font-size:29.5px;color:#262c33;-webkit-text-stroke:0.35px #262c33;transform:scaleX(0.9546);transform-origin:0 0;">10 Yard Trash Service</div>
<div class="t" style="left:320.0px;top:1189.5px;font-size:26.4px;font-weight:bold;color:#2b3138;-webkit-text-stroke:0.3px #2b3138;transform:scaleX(0.8905);transform-origin:0 0;-webkit-text-stroke:0.45px #2b3138;">SERVICE REGION</div>
<div class="a" style="left:697.5px;top:1169.6px;width:612.5px;height:59.0px;box-sizing:border-box;border:1px solid #c3dfb0;background:#fff;"></div>
<div class="a" style="left:698.5px;top:1170.6px;width:553.0px;height:57.0px;background:#f9ebe8;"></div>
<svg class="a" style="left:1269.5px;top:1193.3px" width="22" height="12" viewBox="0 0 22 12"><path d="M0 0H21.7L10.85 11.6Z" fill="#959595"/></svg>
<div class="t" style="left:320.0px;top:1270.9px;font-size:26.4px;font-weight:bold;color:#2b3138;-webkit-text-stroke:0.3px #2b3138;transform:scaleX(0.8932);transform-origin:0 0;-webkit-text-stroke:0.45px #2b3138;">FREQUENCY</div>
<div class="a" style="left:697.5px;top:1251.2px;width:612.5px;height:59.0px;box-sizing:border-box;border:1px solid #c3dfb0;background:#fff;"></div>
<div class="a" style="left:698.5px;top:1252.2px;width:553.0px;height:57.0px;background:#f9ebe8;"></div>
<svg class="a" style="left:1269.5px;top:1274.9px" width="22" height="12" viewBox="0 0 22 12"><path d="M0 0H21.7L10.85 11.6Z" fill="#959595"/></svg>
<div class="t" style="left:320.0px;top:1352.3px;font-size:26.4px;font-weight:bold;color:#2b3138;-webkit-text-stroke:0.3px #2b3138;transform:scaleX(0.8953);transform-origin:0 0;-webkit-text-stroke:0.45px #2b3138;">FIRST ITEM RATE</div>
<div class="a" style="left:697.5px;top:1332.0px;width:612.5px;height:59.0px;box-sizing:border-box;border:1px solid #c3dfb0;background:#fff;"></div>
<div class="a" style="left:698.5px;top:1333.0px;width:553.0px;height:57.0px;background:#f9ebe8;"></div>
<svg class="a" style="left:1269.5px;top:1345.7px" width="22" height="32" viewBox="0 0 22 32"><path d="M10.9 0L21.8 10.3H0Z" fill="#959595"/><path d="M0 21H21.8L10.9 31.7Z" fill="#959595"/></svg>
<div class="t" style="left:320.0px;top:1433.7px;font-size:26.4px;font-weight:bold;color:#2b3138;-webkit-text-stroke:0.3px #2b3138;transform:scaleX(0.9470);transform-origin:0 0;-webkit-text-stroke:0.45px #2b3138;">ADDITIONAL QUANTITY RATE</div>
<div class="a" style="left:697.5px;top:1413.4px;width:612.5px;height:59.0px;box-sizing:border-box;border:1px solid #c3dfb0;background:#fff;"></div>
<div class="a" style="left:698.5px;top:1414.4px;width:553.0px;height:57.0px;background:#f9ebe8;"></div>
<svg class="a" style="left:1269.5px;top:1427.1px" width="22" height="32" viewBox="0 0 22 32"><path d="M10.9 0L21.8 10.3H0Z" fill="#959595"/><path d="M0 21H21.8L10.9 31.7Z" fill="#959595"/></svg>
<div class="t" style="left:320.0px;top:1515.1px;font-size:26.4px;font-weight:bold;color:#2b3138;-webkit-text-stroke:0.3px #2b3138;transform:scaleX(0.8764);transform-origin:0 0;-webkit-text-stroke:0.45px #2b3138;">EFFECTIVE DATE</div>
<div class="a" style="left:697.5px;top:1495.7px;width:612.5px;height:59.0px;box-sizing:border-box;border:1px solid #c3dfb0;background:#fff;"></div>
<div class="a" style="left:698.5px;top:1496.7px;width:553.0px;height:57.0px;background:#f9ebe8;"></div>
<svg class="a" style="left:1262px;top:1507.0px" width="40" height="37" viewBox="0 0 40 37"><rect x="0.7" y="0" width="38.8" height="4.8" fill="#959595"/><rect x="0.7" y="7.7" width="7.3" height="7.3" fill="#959595"/><rect x="10.6" y="7.7" width="7.3" height="7.3" fill="#959595"/><rect x="21" y="7.7" width="7.3" height="7.3" fill="#959595"/><rect x="31" y="7.7" width="7.3" height="7.3" fill="#959595"/><rect x="0.7" y="18.4" width="7.3" height="7.3" fill="#959595"/><path d="M13.2 18.4h2.4v2.6h2.6v2.4h-2.6v2.6h-2.4v-2.6h-2.6v-2.4h2.6z" fill="#959595"/><rect x="21" y="18.4" width="7.3" height="7.3" fill="#959595"/><rect x="31" y="18.4" width="7.3" height="7.3" fill="#959595"/><rect x="0.7" y="29" width="7.3" height="7.3" fill="#959595"/><rect x="10.6" y="29" width="7.3" height="7.3" fill="#959595"/><rect x="21" y="29" width="7.3" height="7.3" fill="#959595"/><rect x="31" y="29" width="7.3" height="7.3" fill="#959595"/></svg>
<div class="a" style="left:258.0px;top:1700.0px;width:1177.0px;height:13.0px;background:linear-gradient(#7f8890 0,#7f8890 7px,#c4c4c4 13px);"></div>
<div class="a" style="left:258.0px;top:1615.0px;width:1177.0px;height:93.0px;background:#e5f0fc;border-radius:0 0 6px 6px;"></div>
<div class="a" style="left:718.7px;top:1632.0px;width:252.5px;height:59.4px;background:#a1c4ae;border-radius:6px;"></div>
<div class="t" style="left:810.4px;top:1647.2px;font-size:28.5px;font-weight:bold;color:#f4f8f5;-webkit-text-stroke:0.3px #f4f8f5;transform:scaleX(0.9139);transform-origin:0 0;-webkit-text-stroke:0.6px #f4f8f5;">SAVE</div>
<svg class="a" style="left:1710px;top:93px" width="40" height="40" viewBox="0 0 40 40"><circle cx="20" cy="20" r="20" fill="#45ad48"/><path d="M7.1 9.8L22 7.8V32.4L7.1 30.1Z" fill="#fff"/><rect x="22" y="11" width="11" height="18.1" fill="#fff"/><g fill="#3f9f42"><rect x="22" y="13" width="2.9" height="1.6"/><rect x="26.2" y="13" width="4.6" height="1.6"/><rect x="22" y="17.2" width="2.9" height="1.6"/><rect x="26.2" y="17.2" width="4.6" height="1.6"/><rect x="22" y="21.4" width="2.9" height="1.6"/><rect x="26.2" y="21.4" width="4.6" height="1.6"/><rect x="22" y="25.3" width="2.9" height="1.6"/><rect x="26.2" y="25.3" width="4.6" height="1.6"/></g><path d="M11.2 15H13.2L14.5 18.6L15.8 15H17.8L15.6 20L17.9 25H15.9L14.5 21.4L13.1 25H11.1L13.4 20Z" fill="#3f9f42"/></svg>
<div class="a" style="left:1763.0px;top:97.3px;width:364.0px;height:41.2px;box-sizing:border-box;border:1px solid #c9ddb6;background:#fff;"></div>
<div class="t" style="left:1772.0px;top:106.5px;font-size:20.4px;color:#b5b5b5;-webkit-text-stroke:0.35px #b5b5b5;transform:scaleX(0.9209);transform-origin:0 0;">Search</div>
<svg class="a" style="left:2052px;top:104px" width="28" height="28" viewBox="0 0 28 28"><circle cx="12" cy="12" r="8.8" fill="none" stroke="#959595" stroke-width="3.4"/><path d="M18.5 18.5L25 25" stroke="#8e8e8e" stroke-width="5" stroke-linecap="round"/></svg>
<svg class="a" style="left:2093px;top:105px" width="26" height="26" viewBox="0 0 26 26"><circle cx="12.9" cy="12.7" r="12.6" fill="#cbcbcb"/><path d="M5.8 5.6L20 19.8M20 5.6L5.8 19.8" stroke="#f2f2f2" stroke-width="1.7"/></svg>
<svg class="a" style="left:2139px;top:94px" width="40" height="38" viewBox="0 0 40 38"><path d="M6.8 13.4A15 15 0 0 1 31 9.2" fill="none" stroke="#45ad48" stroke-width="4.6" stroke-linecap="round"/><path d="M38 6V19.5L26.3 12.6Z" fill="#45ad48"/><path d="M34.2 25.6A15 15 0 0 1 9.5 29.6" fill="none" stroke="#45ad48" stroke-width="4.6" stroke-linecap="round"/><path d="M2 19.2V32L13.1 25.8Z" fill="#45ad48"/></svg>
</body></html>
